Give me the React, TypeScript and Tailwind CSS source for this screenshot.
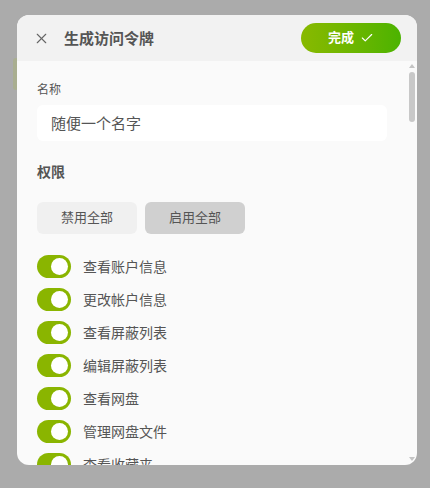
import React from "react";
import { X, Check } from "lucide-react";

const perms = [
  "查看账户信息",
  "更改帐户信息",
  "查看屏蔽列表",
  "编辑屏蔽列表",
  "查看网盘",
  "管理网盘文件",
  "查看收藏夹",
];

function Toggle() {
  return (
    <div className="w-[34px] h-[23px] rounded-full bg-[#8ab500] flex items-center justify-end pr-[3px] shrink-0">
      <div className="w-[17px] h-[17px] rounded-full bg-white" />
    </div>
  );
}

export default function App() {
  return (
    <div
      className="relative w-[430px] h-[488px] bg-[#ababab] overflow-hidden"
      style={{ fontFamily: '"Noto Sans", "Noto Sans CJK SC", sans-serif' }}
    >
      <div className="absolute left-[13px] top-[58px] w-[6px] h-[32px] rounded-sm bg-[#a9ae90]" />
      <div className="relative ml-[17px] mt-[15px] w-[400px] h-[450px] rounded-[12px] bg-[#fafafa] overflow-hidden flex flex-col">
        <div className="h-[46px] shrink-0 bg-[#f2f2f2] flex items-center pl-[16px] pr-[16px]">
          <X size={17} strokeWidth={1.6} className="text-[#666]" />
          <div className="ml-[14px] text-[15px] font-bold text-[#555]">生成访问令牌</div>
          <button className="ml-auto w-[100px] h-[30px] rounded-full bg-gradient-to-r from-[#88b900] to-[#4bb300] flex items-center justify-center gap-[6px] text-white text-[13px] font-bold">
            <span>完成</span>
            <Check size={14} strokeWidth={2} />
          </button>
        </div>
        <div className="flex-1 overflow-hidden pl-[20px] pr-[30px] pt-[20px]">
          <div className="text-[12px] leading-[17px] text-[#555]">名称</div>
          <div className="mt-[7px] h-[36px] rounded-[6px] bg-white flex items-center px-[14px] text-[15px] text-[#555]">
            随便一个名字
          </div>
          <div className="mt-[21px] text-[14px] leading-[20px] font-bold text-[#555]">权限</div>
          <div className="mt-[20px] flex gap-[8px]">
            <button className="w-[100px] h-[32px] rounded-[6px] bg-[#f0f0f0] text-[13px] text-[#555]">禁用全部</button>
            <button className="w-[100px] h-[32px] rounded-[6px] bg-[#d0d0d0] text-[13px] text-[#555]">启用全部</button>
          </div>
          <div className="mt-[21px] flex flex-col gap-[10px]">
            {perms.map((p) => (
              <div key={p} className="flex items-center gap-[12px] h-[23px]">
                <Toggle />
                <span className="text-[14px] text-[#555]">{p}</span>
              </div>
            ))}
          </div>
        </div>
        <div className="absolute right-[2px] top-[46px] bottom-[2px] w-[7px] flex flex-col items-center">
          <div className="mt-[3px] w-0 h-0 border-l-[3.5px] border-r-[3.5px] border-b-[4px] border-l-transparent border-r-transparent border-b-[#c4c4c4]" />
          <div className="mt-[4px] w-[6px] h-[50px] rounded-full bg-[#c8c8c8]" />
          <div className="mt-auto mb-[2px] w-0 h-0 border-l-[3.5px] border-r-[3.5px] border-t-[4px] border-l-transparent border-r-transparent border-t-[#c4c4c4]" />
        </div>
      </div>
    </div>
  );
}
